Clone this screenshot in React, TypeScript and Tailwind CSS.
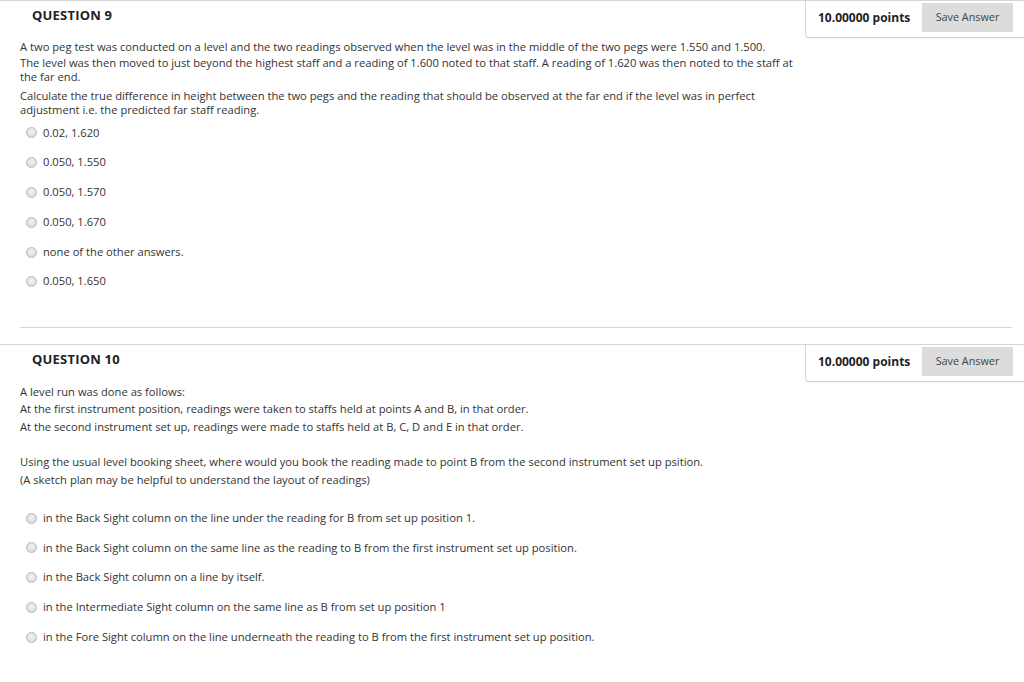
import React from "react";

function Radio() {
  return (
    <span className="inline-block w-[11px] h-[11px] rounded-full border border-[#b9b9b9] bg-[radial-gradient(circle_at_50%_40%,#f4f4f4,#d2d2d2)] shrink-0" />
  );
}

function Header({ title }: { title: string }) {
  return (
    <div className="flex items-start justify-between border-t border-[#d6d6d6]">
      <div className="pl-[32px] pt-[5px] text-[13px] font-bold text-[#222] tracking-[0.2px]">{title}</div>
      <div className="w-[219px] h-[37px] flex items-start pt-[2px] border-l border-b border-[#d6d6d6] rounded-bl-[4px] shadow-[0_1px_1px_rgba(0,0,0,0.05)] pl-[12px]">
        <span className="text-[12px] font-bold text-[#222] w-[104px] leading-[29px]">10.00000 points</span>
        <span className="w-[91px] h-[29px] bg-[#dcdcdc] flex items-center justify-center text-[10.8px] text-[#444]">Save Answer</span>
      </div>
    </div>
  );
}

function Option({ text }: { text: string }) {
  return (
    <div className="flex items-center h-[29.8px] pl-[26px] gap-[6px]">
      <Radio />
      <span>{text}</span>
    </div>
  );
}

export default function App() {
  return (
    <div className="w-[1024px] h-[682px] bg-white overflow-hidden text-[11.2px] text-[#333] font-['Open_Sans',sans-serif]">
      <Header title="QUESTION 9" />
      <div className="px-[20px] pt-[2px] leading-[14px] w-[822px]">
        <p className="mb-[2px]">
          A two peg test was conducted on a level and the two readings observed when the level was in the middle of the two pegs were 1.550 and 1.500.
        </p>
        <p className="mb-[5px]">
          The level was then moved to just beyond the highest staff and a reading of 1.600 noted to that staff. A reading of 1.620 was then noted to the staff at the far end.
        </p>
        <p>
          Calculate the true difference in height between the two pegs and the reading that should be observed at the far end if the level was in perfect adjustment i.e. the predicted far staff reading.
        </p>
      </div>
      <div className="pt-[1px]">
        <Option text="0.02, 1.620" />
        <Option text="0.050,  1.550" />
        <Option text="0.050,  1.570" />
        <Option text="0.050, 1.670" />
        <Option text="none of the other answers." />
        <Option text="0.050,  1.650" />
      </div>
      <div className="mx-[20px] mt-[30px] border-t border-[#d6d6d6] w-[992px]" />
      <div className="mt-[16px]">
        <Header title="QUESTION 10" />
      </div>
      <div className="px-[20px] pt-[1px] leading-[17.5px]">
        <p>A level run was done as follows:</p>
        <p>At the first instrument position, readings were taken to staffs held at points A and B, in that order.</p>
        <p>At the second instrument set up, readings were made to staffs held at B, C, D and E in that order.</p>
        <p className="mt-[18px]">Using the usual level booking sheet, where would you book the reading made to point B from the second instrument set up psition.</p>
        <p>(A sketch plan may be helpful to understand the layout of readings)</p>
      </div>
      <div className="pt-[15px]">
        <Option text="in the Back Sight column on the line under the reading for B from set up position 1." />
        <Option text="in the Back Sight column on the same line as the reading to B from the first instrument set up position." />
        <Option text="in the Back Sight column on a line by itself." />
        <Option text="in the Intermediate Sight column on the same line as B from set up position 1" />
        <Option text="in the Fore Sight column on the line underneath the reading to B from the first instrument set up position." />
      </div>
    </div>
  );
}
